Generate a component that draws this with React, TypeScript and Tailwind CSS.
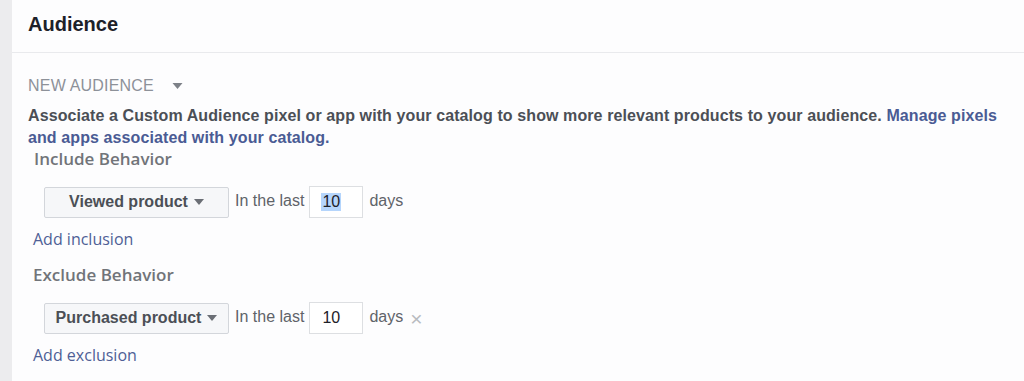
import React from "react";

function Caret({ className = "" }: { className?: string }) {
  return (
    <svg className={className} viewBox="0 0 10 6" fill="currentColor">
      <path d="M0 0h10L5 6z" />
    </svg>
  );
}

function BehaviorRow({ label, selected, removable }: { label: string; selected?: boolean; removable?: boolean }) {
  return (
    <div className="flex items-center ml-[16px]">
      <button className="w-[185px] h-[31px] flex items-center justify-center gap-[6px] bg-[#f6f7f9] border border-[#d3d6db] rounded-[2px] text-[#4b4f56] text-[16px] font-bold">
        {label}
        <Caret className="w-[10px] h-[6px] text-[#6a6e75]" />
      </button>
      <span className="ml-[6px] -mt-[2px] text-[16px] text-[#5f6369]">In the last</span>
      <div className="ml-[5px] w-[54px] h-[32px] bg-white border border-[#dddfe2] flex items-center pl-[11px] text-[16px] text-[#1d2129]">
        <span className={selected ? "bg-[#b5d5fc] leading-[18px] px-[1px]" : "px-[1px]"}>10</span>
      </div>
      <span className="ml-[6px] -mt-[2px] text-[16px] text-[#5f6369]">days</span>
      {removable && <span className="ml-[7px] text-[21px] leading-none text-[#b8bbc0]">×</span>}
    </div>
  );
}

export default function App() {
  const heading = { fontFamily: '"Open Sans", "DejaVu Sans", sans-serif' };
  return (
    <div
      className="flex w-[1024px] h-[381px] overflow-hidden bg-white"
      style={{ fontFamily: '"Liberation Sans", Arial, sans-serif' }}
    >
      <div className="w-[12px] shrink-0 bg-[#ececee]" />
      <div className="flex-1 flex flex-col bg-[#fdfdfe]">
        <div className="pt-[12px] pb-[16px] px-[16px] border-b border-[#e9eaed]">
          <h2 className="text-[20px] leading-[24px] font-bold text-[#1d2129]">Audience</h2>
        </div>

        <div className="px-[16px]">
          <div className="mt-[23px] flex items-center leading-[20px]">
            <span className="text-[16px] uppercase text-[#8d9199] tracking-[0.2px]">New Audience</span>
            <Caret className="ml-[18px] w-[11px] h-[6px] text-[#7d8188]" />
          </div>

          <p className="mt-[9px] text-[16px] leading-[22px] font-bold tracking-[0.1px] text-[#4b4f56]">
            Associate a Custom Audience pixel or app with your catalog to show more relevant products to your audience.{" "}
            <a className="text-[#4a5b94]">Manage pixels and apps associated with your catalog.</a>
          </p>

          <div className="ml-[6px] leading-[20px] text-[17px] font-semibold text-[#717479]" style={heading}>
            Include Behavior
          </div>
          <div className="mt-[17px]">
            <BehaviorRow label="Viewed product" selected />
          </div>
          <div className="mt-[11px] ml-[5px] leading-[20px] text-[16px] text-[#4f5f96]" style={heading}>
            Add inclusion
          </div>

          <div className="mt-[16px] ml-[5px] leading-[20px] text-[17px] font-semibold text-[#717479]" style={heading}>
            Exclude Behavior
          </div>
          <div className="mt-[17px]">
            <BehaviorRow label="Purchased product" removable />
          </div>
          <div className="mt-[11px] ml-[5px] leading-[20px] text-[16px] text-[#4f5f96]" style={heading}>
            Add exclusion
          </div>
        </div>
      </div>
    </div>
  );
}
